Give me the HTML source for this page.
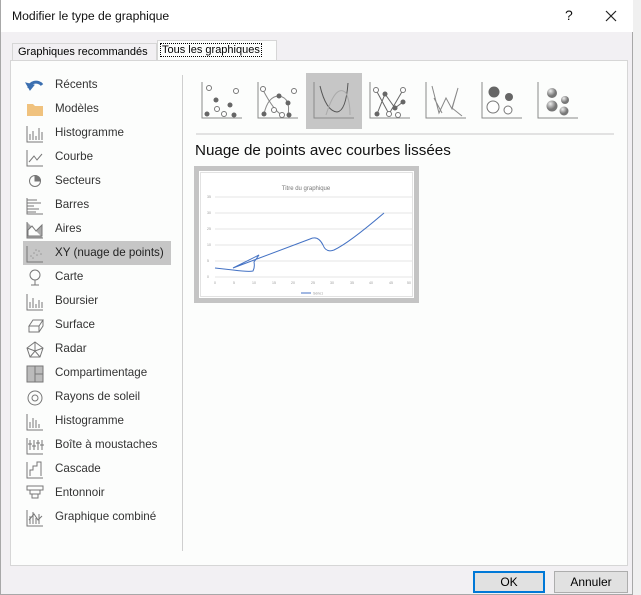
<!DOCTYPE html>
<html><head><meta charset="utf-8"><style>
*{margin:0;padding:0;box-sizing:border-box}
body{width:641px;height:595px;overflow:hidden;background:#f0f0f0;font-family:"Liberation Sans",sans-serif;position:relative}
.dlg{position:absolute;left:0;top:0;width:633px;height:595px;background:#f2f0f3;border:1px solid #a8a8a8;border-top:none}
.title{position:absolute;left:0;top:0;width:632px;height:32px;background:#fff}
.title span{position:absolute;left:11px;top:9px;font-size:12.2px;color:#111}
.tab{position:absolute;font-size:11px;color:#000;height:19px;line-height:17px;white-space:nowrap}
.panel{position:absolute;left:9px;top:60px;width:618px;height:506px;background:#fcfdfc;border:1px solid #d6d6d6}
.item{position:absolute;left:54px;font-size:11.6px;color:#333;white-space:nowrap}
.btn{position:absolute;top:571px;height:22px;font-size:12px;text-align:center;line-height:20px;background:#e1e1e1;border:1px solid #adadad}
</style></head><body>
<div class="dlg">
<div class="title"><span>Modifier le type de graphique</span>
<span style="left:564px;top:7px;font-size:14px">?</span>
<svg style="position:absolute;left:604px;top:10px" width="12" height="12"><path d="M1 1L11 11M11 1L1 11" stroke="#222" stroke-width="1.2"/></svg></div>
<div class="tab" style="left:11px;top:43px;width:145px;border:1px solid #d6d6d6;border-bottom:none;background:#f2f0f3;padding-left:5px">Graphiques recommandés</div>
<div class="tab" style="left:156px;top:40px;width:120px;height:21px;border:1px solid #d6d6d6;border-bottom:none;background:#fcfdfc;padding-left:3px;line-height:18px"><span style="outline:1px dotted #000;padding:0 1px">Tous les graphiques</span></div>
<div class="panel"></div>
<div style="position:absolute;left:22px;top:241px;width:148px;height:24px;background:#c6c6c6"></div>
<div style="position:absolute;left:181px;top:75px;width:1px;height:476px;background:#cfcfcf"></div>

<div class="item" style="top:78px">Récents</div>
<div class="item" style="top:102px">Modèles</div>
<div class="item" style="top:126px">Histogramme</div>
<div class="item" style="top:150px">Courbe</div>
<div class="item" style="top:174px">Secteurs</div>
<div class="item" style="top:198px">Barres</div>
<div class="item" style="top:222px">Aires</div>
<div class="item" style="top:246px;color:#222">XY (nuage de points)</div>
<div class="item" style="top:270px">Carte</div>
<div class="item" style="top:294px">Boursier</div>
<div class="item" style="top:318px">Surface</div>
<div class="item" style="top:342px">Radar</div>
<div class="item" style="top:366px">Compartimentage</div>
<div class="item" style="top:390px">Rayons de soleil</div>
<div class="item" style="top:414px">Histogramme</div>
<div class="item" style="top:438px">Boîte à moustaches</div>
<div class="item" style="top:462px">Cascade</div>
<div class="item" style="top:486px">Entonnoir</div>
<div class="item" style="top:510px">Graphique combiné</div>

<svg style="position:absolute;left:24px;top:76px" width="22" height="456" fill="none" stroke="#777" stroke-width="1">
<path d="M4 12 A7 6 0 0 1 17 9" stroke="#3b6fb0" stroke-width="3"/><path d="M1 7L5 14L9 9Z" fill="#3b6fb0" stroke="#3b6fb0"/>
<path d="M2 28h6l2 2h8v10h-16z" fill="#f0c27e" stroke="none"/>
<path d="M2 50V66H18M5 64V58M8 64V55M11 64V60M14 64V52M17 64V56"/>
<path d="M2 74V90H18M4 86L9 80L12 84L17 78"/>
<circle cx="10" cy="105" r="5.5"/><path d="M10 105V99.5A5.5 5.5 0 0 1 15.5 105Z" fill="#777"/>
<path d="M2 122V138H18M2 124h10M2 127h14M2 130h7M2 133h12M2 136h9"/>
<path d="M2 146V162H18M3 154L7 150L11 155L17 149V160H3Z" fill="#aaa"/>
<path d="M2 170V186H18"/>
<g fill="#999" stroke="none"><circle cx="6" cy="180" r=".8"/><circle cx="9" cy="177" r=".8"/><circle cx="12" cy="179" r=".8"/><circle cx="14" cy="175" r=".8"/><circle cx="16" cy="178" r=".8"/><circle cx="8" cy="182" r=".8"/><circle cx="11" cy="174" r=".8"/></g>
<circle cx="10" cy="199" r="5"/><path d="M6 209h8M10 204v5"/>
<path d="M2 218V234H18M5 232V226M8 232V222M11 232V228M14 232V224M17 232V226"/>
<path d="M4 250l4-6h10l-4 6zM4 250v6h10v-6M14 256l4-6v-6"/>
<path d="M10 266l8 6-3 9h-10l-3-9zM10 266v9M2 272l8 3l8-3M5 281l5-6l5 6"/>
<path d="M2 290h16v16h-16zM10 290v16M10 298h8" fill="#bbb"/>
<circle cx="10" cy="322" r="7"/><circle cx="10" cy="322" r="3"/>
<path d="M2 338V354H18M5 352V346M8 352V342M11 352V344M14 352V348"/>
<path d="M2 362V378H18M5 364v10M9 364v10M13 364v10M17 364v10M3 368h4M7 370h4M11 367h4M15 369h4"/>
<path d="M2 386V402H18M5 400V394h3v-4h4v-4h4v14"/>
<path d="M2 410h16v4h-16zM5 414h10v4h-10zM7 418h6v4h-6z"/>
<path d="M2 434V450H18M5 448V440M8 448V436M11 448V442M14 448V438M4 444L9 438L13 444L17 440"/>
</svg>

<svg style="position:absolute;left:195px;top:73px" width="420" height="62" fill="none" stroke="#777">
<rect x="110" y="0" width="56" height="56" fill="#c6c6c6" stroke="none"/>
<g stroke="#8a8a8a"><path d="M6 9V45H46M62 9V45H102M118 9V45H158M174 9V45H214M230 9V45H270M286 9V45H326M342 9V45H382"/></g>
<g fill="#666" stroke="none"><circle cx="11" cy="41" r="2.5"/><circle cx="20" cy="27" r="2.5"/><circle cx="34" cy="32" r="2.5"/><circle cx="38" cy="42" r="2.5"/></g>
<g fill="#fff" stroke="#777"><circle cx="13" cy="15" r="2.5"/><circle cx="40" cy="18" r="2.5"/><circle cx="21" cy="36" r="2.5"/><circle cx="28" cy="41" r="2.5"/></g>
<path d="M68 41Q72 23 83 23Q95 25 92 42M67 17Q78 38 86 42" stroke="#888"/>
<g fill="#666" stroke="none"><circle cx="68" cy="41" r="2.5"/><circle cx="83" cy="23" r="2.5"/><circle cx="92" cy="30" r="2.5"/><circle cx="93" cy="42" r="2.5"/></g>
<g fill="#fff" stroke="#777"><circle cx="67" cy="16" r="2.5"/><circle cx="98" cy="18" r="2.5"/><circle cx="78" cy="37" r="2.5"/><circle cx="86" cy="42" r="2.5"/></g>
<path d="M124 13Q130 38 141 39Q150 38 152 10" stroke="#555"/><path d="M130 42Q140 10 150 20Q154 28 154 42" stroke="#aaa"/>
<path d="M180 17L193 41L207 17M181 41L189 21L199 35L207 29" stroke="#666"/>
<g fill="#666" stroke="none"><circle cx="181" cy="41" r="2.5"/><circle cx="189" cy="21" r="2.5"/><circle cx="199" cy="35" r="2.5"/><circle cx="207" cy="29" r="2.5"/></g>
<g fill="#fff" stroke="#777"><circle cx="180" cy="17" r="2.5"/><circle cx="207" cy="17" r="2.5"/><circle cx="193" cy="41" r="2.5"/><circle cx="202" cy="42" r="2.5"/></g>
<path d="M236 13L243 40L250 25L256 36L262 15L256 35L266 43M238 25L246 40" stroke="#888"/>
<circle cx="298" cy="19" r="5.5" fill="#666" stroke="none"/><circle cx="313" cy="24" r="4" fill="#666" stroke="none"/><circle cx="297" cy="34" r="6" fill="#fff"/><circle cx="312" cy="37" r="4" fill="#fff"/>
<defs><radialGradient id="g" cx=".35" cy=".3"><stop offset="0" stop-color="#eee"/><stop offset="1" stop-color="#777"/></radialGradient></defs>
<circle cx="356" cy="20" r="5" fill="url(#g)" stroke="none"/><circle cx="369" cy="27" r="4" fill="url(#g)" stroke="none"/><circle cx="356" cy="33" r="5.5" fill="url(#g)" stroke="none"/><circle cx="368" cy="38" r="4.5" fill="url(#g)" stroke="none"/>
<path d="M0 61H418" stroke="#c8c8c8"/>
</svg>

<div style="position:absolute;left:194px;top:142px;font-size:15.2px;color:#111;white-space:nowrap">Nuage de points avec courbes lissées</div>

<div style="position:absolute;left:193px;top:166px;width:225px;height:137px;background:#c4c4c4;padding:5px">
<svg width="215" height="127" style="background:#fff;display:block">
<rect x="1.5" y="1.5" width="212" height="124" fill="none" stroke="#e2e2e2"/>
<text x="107" y="19" font-size="6" fill="#777" text-anchor="middle" font-family="Liberation Sans">Titre du graphique</text>
<g stroke="#e4e4e4"><path d="M16 26H213M16 42H213M16 58H213M16 74H213M16 90H213M16 106H213"/></g>
<g font-size="3.5" fill="#999" font-family="Liberation Sans"><text x="8" y="27">35</text><text x="8" y="43">30</text><text x="8" y="59">25</text><text x="8" y="75">10</text><text x="8" y="91">5</text><text x="8" y="107">0</text>
<text x="15" y="113">0</text><text x="34" y="113">5</text><text x="53" y="113">10</text><text x="73" y="113">15</text><text x="92" y="113">20</text><text x="112" y="113">25</text><text x="131" y="113">30</text><text x="151" y="113">35</text><text x="170" y="113">40</text><text x="190" y="113">45</text><text x="208" y="113">50</text></g>
<path d="M16 97L34 99Q50 101 54 100Q56 96 55 91L60 84L34 97L111 68Q119 64 124 74Q127 82 135 79Q150 72 185 42" fill="none" stroke="#4472c4" stroke-width="1"/>
<path d="M102 122h10" stroke="#4472c4"/><text x="114" y="123.5" font-size="3.5" fill="#999">Série1</text>
</svg></div>

<div class="btn" style="left:472px;width:72px;border:2px solid #0078d7;line-height:18px">OK</div>
<div class="btn" style="left:553px;width:74px">Annuler</div>
</div>
</body></html>
